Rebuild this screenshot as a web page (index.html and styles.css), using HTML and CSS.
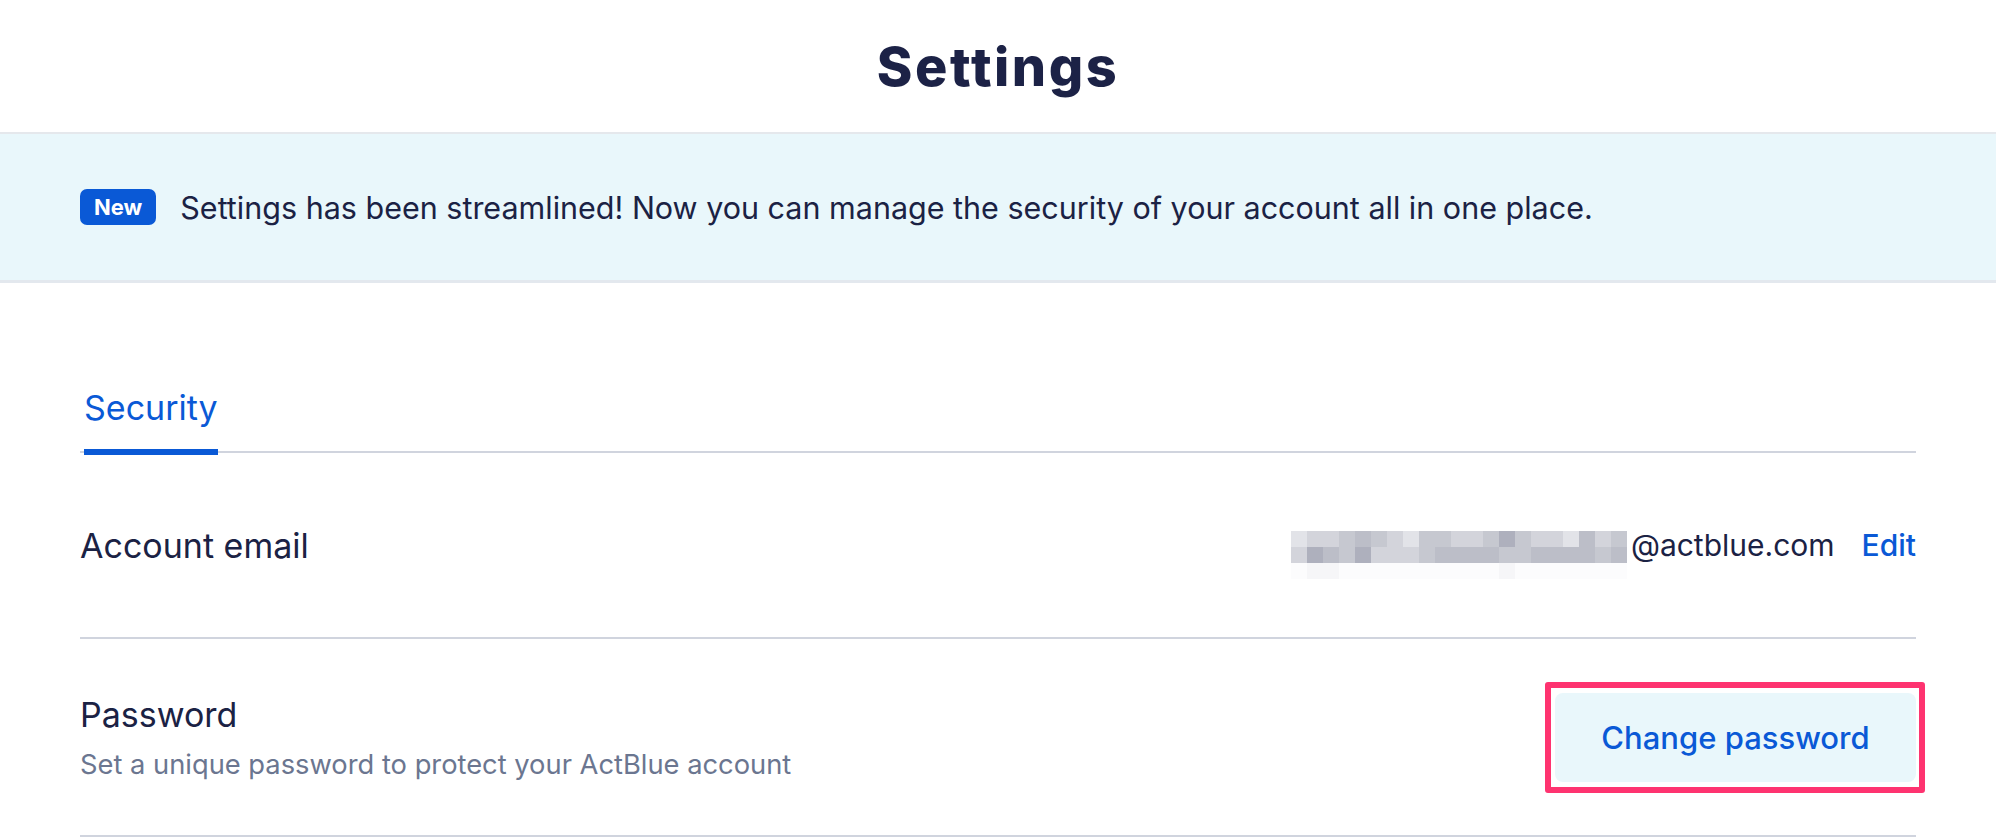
FILE: index.html
```html
<!DOCTYPE html>
<html>
  <head>
    <meta charset="utf-8">
    <title>Settings</title>
    <link rel="stylesheet" href="styles.css">
  </head>
  <body>
    <header class="page-header">
      <h1>Settings</h1>
    </header>

    <div class="notice">
      <span class="badge">New</span>
      <p>Settings has been streamlined! Now you can manage the security of your account all in one place.</p>
    </div>

    <main class="content">
      <nav class="tabs">
        <a class="tab active" href="#">Security</a>
      </nav>

      <section class="row">
        <div class="label">Account email</div>
        <div class="email">
          <!-- blurred address -->
          <div class="blur">
            <span class="s2"></span><span class="s3"></span><span class="s3"></span><span class="s4"></span><span class="s5"></span><span class="s4"></span><span class="s3"></span><span class="s2"></span><span class="s4"></span><span class="s4"></span><span class="s3"></span><span class="s3"></span><span class="s4"></span><span class="s6"></span><span class="s4"></span><span class="s3"></span><span class="s3"></span><span class="s2"></span><span class="s5"></span><span class="s3"></span><span class="s4"></span>
            <span class="s3"></span><span class="s6"></span><span class="s5"></span><span class="s4"></span><span class="s6"></span><span class="s3"></span><span class="s3"></span><span class="s3"></span><span class="s4"></span><span class="s5"></span><span class="s5"></span><span class="s5"></span><span class="s5"></span><span class="s4"></span><span class="s4"></span><span class="s5"></span><span class="s5"></span><span class="s5"></span><span class="s5"></span><span class="s4"></span><span class="s5"></span>
            <span class="s0"></span><span class="s1"></span><span class="s1"></span><span class="s0"></span><span class="s0"></span><span class="s0"></span><span class="s0"></span><span class="s0"></span><span class="s0"></span><span class="s0"></span><span class="s0"></span><span class="s0"></span><span class="s0"></span><span class="s1"></span><span class="s0"></span><span class="s0"></span><span class="s0"></span><span class="s0"></span><span class="s0"></span><span class="s0"></span><span class="s0"></span>
          </div>
          <span class="domain">@actblue.com</span>
          <a class="link" href="#">Edit</a>
        </div>
      </section>

      <section class="row tall">
        <div>
          <div class="label">Password</div>
          <div class="hint">Set a unique password to protect your ActBlue account</div>
        </div>
        <button class="btn-soft highlighted">Change password</button>
      </section>
    </main>
  </body>
</html>
```

FILE: styles.css
```css
body {
  margin: 0;
  font-family: Inter, "Noto Sans", sans-serif;
  color: #1b2244;
  background: #fff;
}
.page-header {
  height: 132px;
  border-bottom: 2px solid #e5e8ec;
  display: flex;
  align-items: center;
  justify-content: center;
}
.page-header h1 {
  margin: 0;
  font-size: 54px;
  font-weight: 800;
  letter-spacing: 2.5px;
  color: #1c2246;
}
.notice {
  height: 146px;
  background: #e9f7fb;
  border-bottom: 3px solid #e3e8ee;
  display: flex;
  align-items: center;
  padding: 0 80px;
}
.notice p {
  margin: 0 0 0 24px;
  font-size: 30.5px;
}
.badge {
  background: #0a59d6;
  color: #fff;
  font-size: 22px;
  font-weight: 700;
  padding: 0 14px;
  height: 36px;
  line-height: 36px;
  border-radius: 7px;
}
.content {
  padding: 0 80px;
}
.tabs {
  display: flex;
  margin-top: 104px;
  border-bottom: 2px solid #d0d4de;
}
.tab {
  margin: 0 0 -4px 4px;
  padding-bottom: 21px;
  font-size: 34px;
  color: #0a59d6;
  text-decoration: none;
  border-bottom: 6px solid #0a59d6;
}
.row {
  height: 184px;
  border-bottom: 2px solid #d0d4de;
  display: flex;
  align-items: center;
  justify-content: space-between;
}
.row.tall {
  height: 196px;
}
.label {
  font-size: 34px;
}
.hint {
  margin-top: 13px;
  font-size: 27.3px;
  color: #6b7690;
}
.email {
  display: flex;
  align-items: center;
  font-size: 30px;
}
.blur {
  display: grid;
  grid-template-columns: repeat(21, 16px);
  grid-auto-rows: 16px;
  margin-top: 20px;
}
.blur .s0 { background: #fcfcfd; }
.blur .s1 { background: #f6f6f8; }
.blur .s2 { background: #e2e3e8; }
.blur .s3 { background: #d3d4db; }
.blur .s4 { background: #c6c8d0; }
.blur .s5 { background: #bcbec8; }
.blur .s6 { background: #aeb0bd; }
.domain {
  margin-left: 4px;
}
.link {
  margin-left: 27px;
  color: #0a59d6;
  text-decoration: none;
  font-weight: 500;
}
.btn-soft {
  position: relative;
  width: 361px;
  height: 89px;
  border: none;
  border-radius: 8px;
  background: #e9f7fb;
  color: #0a59d6;
  font-family: inherit;
  font-size: 31px;
  font-weight: 500;
}
/* review highlight drawn over the button */
.highlighted::after {
  content: "";
  position: absolute;
  top: -11px;
  left: -10px;
  right: -9px;
  bottom: -11px;
  border: 6px solid #fe3370;
  border-radius: 3px;
}
```
